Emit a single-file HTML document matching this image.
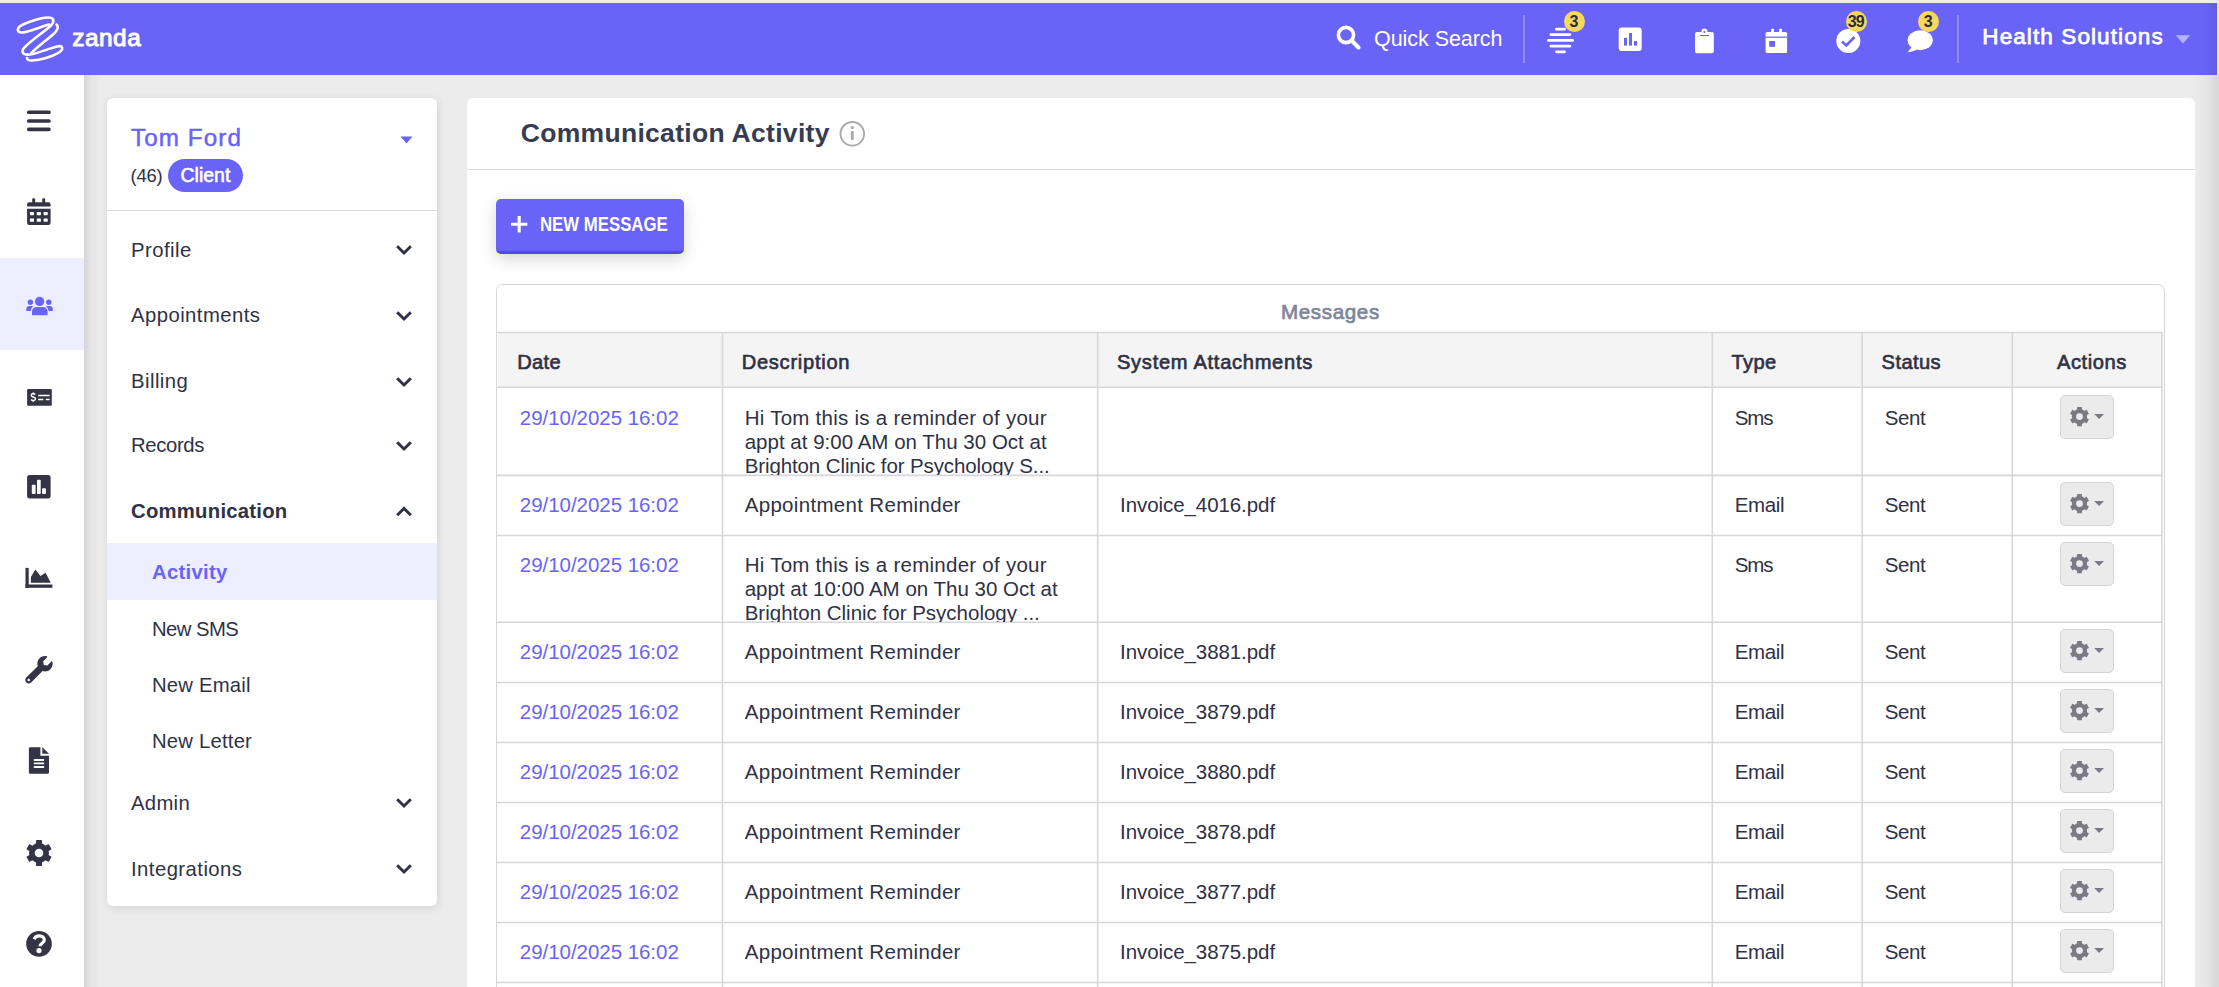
<!DOCTYPE html>
<html><head><meta charset="utf-8">
<style>
*{box-sizing:border-box;margin:0;padding:0}
html,body{width:2219px;height:987px;overflow:hidden;background:#ececec;font-family:"Liberation Sans",sans-serif;color:#2f3145}
.abs{position:absolute}
#topstrip{left:0;top:0;width:2219px;height:3px;background:#efeee9}
#rightstrip{left:2217px;top:0;width:2px;height:75px;background:#e6e6e4}
#hdrShade{left:2195px;top:3px;width:22px;height:72px;background:linear-gradient(to left,rgba(0,0,0,.07),rgba(0,0,0,.02) 45%,rgba(0,0,0,0))}
#rightstrip2{left:2217px;top:75px;width:2px;height:912px;background:#d9d9d9}
#hdr{left:0;top:3px;width:2217px;height:72px;background:#6964f7}
#side{left:0;top:75px;width:84px;height:912px;background:#fff}
#shadowL{left:84px;top:75px;width:17px;height:912px;background:linear-gradient(to right,rgba(0,0,0,.095),rgba(0,0,0,.03) 40%,rgba(0,0,0,0))}
#shadowR{left:2195px;top:75px;width:22px;height:912px;background:linear-gradient(to left,rgba(0,0,0,.09),rgba(0,0,0,.035) 40%,rgba(0,0,0,0))}
#activeNav{left:0;top:258px;width:84px;height:92px;background:#edeeff}
.card{background:#fff;border-radius:6px}
#leftcard{box-shadow:1px 2px 9px rgba(0,0,0,.11)}
#leftcard{left:107px;top:98px;width:330px;height:808px}
#maincard{left:467px;top:98px;width:1728px;height:920px}
.badge{width:21px;height:21px;border-radius:50%;background:#f7d95a;color:#2a2b3d;font-size:16px;font-weight:bold;text-align:center;line-height:22px}
.txt{position:absolute;white-space:nowrap;line-height:1}
</style></head><body>
<div class="abs" id="topstrip"></div>
<div class="abs" id="hdr"></div>
<div class="abs" id="rightstrip"></div><div class="abs" id="hdrShade"></div><div class="abs" id="rightstrip2"></div>
<!-- HEADER -->
<svg class="abs" style="left:0;top:0" width="160" height="75" viewBox="0 0 160 75">
  <g fill="none" stroke="#fff" stroke-width="2.6" stroke-linecap="round" stroke-linejoin="round">
    <path d="M49 24.5 C40 27 26 33 21 32.5 C16 32 17 27 23 24.5 C30 21 42 17.5 48 17.5 C54 17.5 55 21 51 25.5 C45 31 32 40 26 46 C20 51 22 55.5 30 54.5 C38 53.5 50 48 57 46.5 C63 45 64 49 59 52.5 C52 57 40 60 32 60.5 C28 60.7 27 59 27 58"/>
    <path d="M56.5 24.5 C59 26.5 58 30 53 34.5 C47 40 37 47 31.5 53"/>
  </g>
</svg>
<div class="txt" style="left:72.3px;top:25.6px;font-size:24.3px;font-weight:normal;color:#fff;letter-spacing:0.55px;-webkit-text-stroke:1px #fff">zanda</div>
<svg class="abs" style="left:1336px;top:25px" width="26" height="25" viewBox="0 0 26 25">
  <circle cx="10" cy="10" r="7.6" fill="none" stroke="#fff" stroke-width="3.6"/>
  <path d="M15.5 15.5 L22.5 22.5" stroke="#fff" stroke-width="4" stroke-linecap="round"/>
</svg>
<div class="txt" style="left:1374px;top:29px;font-size:21.5px;color:#fff;letter-spacing:-0.05px">Quick Search</div>
<div class="abs" style="left:1523px;top:15px;width:2px;height:48px;background:#8e8af9"></div>
<svg class="abs" style="left:1540px;top:22px" width="40" height="40" viewBox="1540 22 40 40">
  <g stroke="#fff" stroke-width="2.8" stroke-linecap="round">
    <path d="M1556.4 29.2 H1564.5"/><path d="M1551 34.6 H1569.8"/><path d="M1548.4 40.4 H1572.5"/><path d="M1551 46.2 H1569.8"/><path d="M1556.4 51.8 H1564.5"/>
  </g>
</svg>
<svg class="abs" style="left:1616px;top:25px" width="30" height="30" viewBox="1616 25 30 30">
  <rect x="1618.7" y="27.5" width="23" height="23.5" rx="3" fill="#fff"/>
  <rect x="1624" y="37.8" width="3" height="7.8" fill="#6964f7"/>
  <rect x="1629" y="33" width="3" height="12.6" fill="#6964f7"/>
  <rect x="1634" y="41" width="3" height="4.6" fill="#6964f7"/>
</svg>
<svg class="abs" style="left:1690px;top:25px" width="30" height="32" viewBox="1690 25 30 32">
  <rect x="1695" y="32" width="18.8" height="21.2" rx="2" fill="#fff"/>
  <circle cx="1704.4" cy="31.6" r="3" fill="#fff"/>
  <circle cx="1704.4" cy="31.9" r="1" fill="#6964f7"/>
  <rect x="1700" y="35" width="9" height="1.1" fill="#6964f7"/>
</svg>
<svg class="abs" style="left:1762px;top:25px" width="30" height="32" viewBox="1762 25 30 32">
  <rect x="1765.6" y="32" width="21.5" height="21" rx="1.5" fill="#fff"/>
  <rect x="1771" y="28.8" width="3" height="4" fill="#fff"/>
  <rect x="1779" y="28.8" width="3" height="4" fill="#fff"/>
  <rect x="1765.6" y="36.6" width="21.5" height="1.2" fill="#6964f7"/>
  <rect x="1769.2" y="41" width="5.8" height="5.8" fill="#6964f7"/>
</svg>
<svg class="abs" style="left:1832px;top:25px" width="34" height="32" viewBox="1832 25 34 32">
  <circle cx="1848.3" cy="41" r="12" fill="#fff"/>
  <path d="M1842 41.5 L1846.3 45.5 L1854.5 37" fill="none" stroke="#6964f7" stroke-width="2.6"/>
</svg>
<svg class="abs" style="left:1904px;top:27px" width="34" height="30" viewBox="1904 27 34 30">
  <ellipse cx="1920.2" cy="40.3" rx="12.6" ry="10" fill="#fff"/>
  <path d="M1912 46.5 L1907.8 52.2 C1912 51.8 1916 50.5 1918 49" fill="#fff"/>
</svg>
<!-- badges -->
<div class="abs badge" style="left:1563.5px;top:10.5px">3</div>
<div class="abs badge" style="left:1845.8px;top:10.5px;letter-spacing:-0.9px;text-indent:-0.9px">39</div>
<div class="abs badge" style="left:1917.8px;top:10.5px">3</div>
<div class="abs" style="left:1957px;top:15px;width:2px;height:48px;background:#8e8af9"></div>
<div class="txt" style="left:1982.3px;top:25.9px;font-size:22.5px;font-weight:normal;color:#fff;letter-spacing:1.1px;-webkit-text-stroke:0.75px #fff">Health Solutions</div>
<svg class="abs" style="left:2174px;top:34px" width="18" height="11" viewBox="0 0 18 11"><path d="M1.8 1.2 H16.2 L9 9.4 Z" fill="#b4b1fb"/></svg>

<div class="abs" id="side"></div>
<div class="abs" id="activeNav"></div>

<!-- SIDEBAR ICONS -->
<svg class="abs" style="left:0;top:75px" width="84" height="912" viewBox="0 75 84 912">
 <g fill="#343446">
  <rect x="27" y="110.5" width="23.7" height="3.6" rx="1.6"/>
  <rect x="27" y="119.2" width="23.7" height="3.6" rx="1.6"/>
  <rect x="27" y="127.6" width="23.7" height="3.6" rx="1.6"/>
 </g>
 <!-- calendar -->
 <g fill="#343446">
  <rect x="32.2" y="198.3" width="3" height="5" rx="1.2"/>
  <rect x="42.2" y="198.3" width="3" height="5" rx="1.2"/>
  <path d="M27.1 206.6 V204.4 A2.2 2.2 0 0 1 29.3 202.2 H48.4 A2.2 2.2 0 0 1 50.6 204.4 V206.6 Z"/>
  <path d="M27.1 208.8 H50.6 V222.7 A2.2 2.2 0 0 1 48.4 224.9 H29.3 A2.2 2.2 0 0 1 27.1 222.7 Z"/>
 </g>
 <g fill="#fff">
  <rect x="29.9" y="211.9" width="4.1" height="3.3" rx=".6"/><rect x="36.8" y="211.9" width="4.1" height="3.3" rx=".6"/><rect x="43.6" y="211.9" width="4.1" height="3.3" rx=".6"/>
  <rect x="29.9" y="218.4" width="4.1" height="3.4" rx=".6"/><rect x="36.8" y="218.4" width="4.1" height="3.4" rx=".6"/><rect x="43.6" y="218.4" width="4.1" height="3.4" rx=".6"/>
 </g>
 <!-- users -->
 <g fill="#6964f7">
  <circle cx="39.6" cy="301.4" r="4.6"/>
  <circle cx="30.4" cy="302.2" r="2.7"/>
  <circle cx="48.8" cy="302.2" r="2.7"/>
  <path d="M32 315.2 V311.5 C32 308.5 34 307 36.5 307 H42.8 C45.5 307 47.6 308.8 47.6 311.5 V315.2 Z"/>
  <path d="M26.3 311 V309 C26.3 307.3 27.6 306 29.3 306 H33.2 C31.8 307.5 31 309 30.7 311 Z"/>
  <path d="M52.8 311 V309 C52.8 307.3 51.5 306 49.8 306 H46 C47.4 307.5 48.2 309 48.5 311 Z"/>
 </g>
 <!-- invoice -->
 <rect x="27.1" y="389" width="24.7" height="16.8" rx="1" fill="#343446"/>
 <g fill="none" stroke="#fff" stroke-width="1.5">
  <path d="M35.3 394.6 C34.6 393.8 33.6 393.6 32.8 393.7 C31.3 393.9 30.9 395.4 31.8 396.3 C32.6 397 34.2 397.1 35 397.9 C35.9 398.8 35.4 400.4 33.6 400.5 C32.6 400.6 31.6 400.2 31 399.5"/>
  <path d="M33.3 392.4 V393.6 M33.3 400.5 V401.8"/>
  <path d="M38.2 395.4 H49.7 M38.2 399.5 H43.3 M45.8 399.5 H49.7"/>
 </g>
 <!-- bar chart -->
 <rect x="27.1" y="475.1" width="23.5" height="23.3" rx="2.6" fill="#343446"/>
 <g fill="#fff">
  <rect x="31.8" y="484.8" width="3.8" height="9.2" rx=".8"/>
  <rect x="37" y="479.8" width="3.7" height="14.2" rx=".8"/>
  <rect x="42.1" y="488.3" width="3.8" height="5.7" rx=".8"/>
 </g>
 <!-- area chart -->
 <g fill="#343446">
  <rect x="25.5" y="567.9" width="3.2" height="19.9"/>
  <rect x="25.5" y="584.5" width="26.9" height="3.3"/>
  <path d="M30.9 577 L35.4 569.6 L40.5 576 L45.5 572.8 L50.8 582.7 H30.9 Z"/>
 </g>
 <!-- wrench -->
 <g transform="translate(25.3 656) scale(0.0535)">
  <path fill="#343446" d="M507.73 109.1c-2.24-9.03-13.54-12.09-20.12-5.51l-74.36 74.36-67.88-11.31-11.31-67.880 74.36-74.36c6.62-6.62 3.430-17.9-5.66-20.16-47.380-11.74-99.550.91-136.58 37.93-39.640 39.640-50.550 97.1-34.050 147.2L18.740 402.76c-24.990 24.990-24.990 65.510 0 90.5 24.990 24.990 65.510 24.990 90.5 0l213.21-213.21c50.12 16.710 107.47 5.680 147.37-34.220 37.070-37.070 49.7-89.320 37.91-136.73zM64 472c-13.25 0-24-10.75-24-24 0-13.26 10.75-24 24-24s24 10.74 24 24c0 13.25-10.75 24-24 24z"/>
 </g>
 <!-- document -->
 <g fill="#343446">
  <path d="M28.9 748.5 A1.2 1.2 0 0 1 30.1 747.3 H40.4 V755.8 H49 V772.6 A1.2 1.2 0 0 1 47.8 773.8 H30.1 A1.2 1.2 0 0 1 28.9 772.6 Z"/>
  <path d="M42.3 747.3 L49 753.7 H42.3 Z"/>
 </g>
 <g fill="#fff">
  <rect x="33.8" y="758.9" width="10.3" height="2" rx=".5"/>
  <rect x="33.8" y="762.4" width="10.3" height="1.8" rx=".5"/>
  <rect x="33.8" y="765.9" width="10.3" height="2" rx=".5"/>
 </g>
 <!-- gear -->
 <g fill="#343446">
  <circle cx="39" cy="853" r="10"/>
  <rect x="36" y="840.1" width="6" height="25.8" rx=".6"/>
  <rect x="36" y="840.1" width="6" height="25.8" rx=".6" transform="rotate(60 39 853)"/>
  <rect x="36" y="840.1" width="6" height="25.8" rx=".6" transform="rotate(-60 39 853)"/>
 </g>
 <circle cx="39" cy="853" r="4.3" fill="#fff"/>
 <!-- help -->
 <circle cx="39" cy="943.8" r="12.85" fill="#343446"/>
 <path d="M34.2 939.2 C35 936.8 37 935.8 39.3 935.8 C42.3 935.8 44.3 937.7 44.3 940 C44.3 943.3 40 943.3 40 946.3" fill="none" stroke="#fff" stroke-width="3.2" stroke-linecap="butt"/>
 <circle cx="39" cy="950.6" r="2.6" fill="#fff"/>
</svg>
<div class="abs" id="shadowL"></div>
<div class="abs" id="shadowR"></div>
<div class="abs card" id="leftcard"></div>
<div class="abs card" id="maincard"></div>
<!-- MAIN START -->
<div class="abs" style="left:467px;top:168.5px;width:1728px;height:1.5px;background:#dedee2"></div>
<svg class="abs" style="left:838px;top:120px" width="28" height="28" viewBox="838 120 28 28"><circle cx="852.3" cy="133.8" r="11.8" fill="none" stroke="#a9a9b1" stroke-width="1.9"/><circle cx="852.3" cy="127.6" r="1.7" fill="#a9a9b1"/><rect x="850.8" y="131" width="3" height="9" rx="1" fill="#a9a9b1"/></svg>
<div class="abs" style="left:496.2px;top:199px;width:187.6px;height:54.9px;border-radius:5px;background:#6964f7;border-bottom:3.6px solid #4f49f5;box-shadow:0 5px 16px rgba(0,0,0,.16)"></div>
<svg class="abs" style="left:510px;top:215px" width="19" height="19" viewBox="510 215 19 19"><path d="M519.2 216 V232.6 M511 224.3 H527.4" stroke="#fff" stroke-width="3.1"/></svg>
<div class="txt" style="left:540.2px;top:214.79px;font-size:19.3px;font-weight:bold;color:#fff;transform:scaleX(0.87);transform-origin:0 0">NEW MESSAGE</div>
<div class="abs" style="left:495.6px;top:283.7px;width:1669.8px;height:760px;border:1.5px solid #d6d6da;border-radius:7px"></div>
<div class="abs" style="left:497.5px;top:332.5px;width:1665px;height:54.8px;background:#f4f4f5"></div>
<svg class="abs" style="left:0;top:0" width="2219" height="987" viewBox="0 0 2219 987"><g stroke="#d8d8dc" stroke-width="1.6"><path d="M496.3 332.5 H2162.5"/><path d="M496.3 387.3 H2162.5"/><path d="M496.3 475.4 H2162.5"/><path d="M496.3 535.5 H2162.5"/><path d="M496.3 622.3 H2162.5"/><path d="M496.3 682.5 H2162.5"/><path d="M496.3 742.5 H2162.5"/><path d="M496.3 802.5 H2162.5"/><path d="M496.3 862.5 H2162.5"/><path d="M496.3 922.5 H2162.5"/><path d="M496.3 982.5 H2162.5"/><path d="M722.5 332.5 V987"/><path d="M1097.7 332.5 V987"/><path d="M1712.3 332.5 V987"/><path d="M1862.2 332.5 V987"/><path d="M2012.3 332.5 V987"/><path d="M2162 332.5 V987"/></g></svg>
<div class="txt" style="left:520.8px;top:119.97px;font-size:26.5px;font-weight:bold;color:#363c52;letter-spacing:0.30px">Communication Activity</div>
<div class="txt" style="left:1281px;top:302.09px;font-size:20.6px;font-weight:normal;color:#7d8799;letter-spacing:0.62px;-webkit-text-stroke:0.7px #7d8799">Messages</div>
<div class="txt" style="left:517.2px;top:351.52px;font-size:20.1px;font-weight:normal;color:#2f3145;letter-spacing:0.31px;-webkit-text-stroke:0.65px #2f3145">Date</div>
<div class="txt" style="left:741.7px;top:351.52px;font-size:20.1px;font-weight:normal;color:#2f3145;letter-spacing:0.73px;-webkit-text-stroke:0.65px #2f3145">Description</div>
<div class="txt" style="left:1117px;top:351.52px;font-size:20.1px;font-weight:normal;color:#2f3145;letter-spacing:0.71px;-webkit-text-stroke:0.65px #2f3145">System Attachments</div>
<div class="txt" style="left:1731.5px;top:351.52px;font-size:20.1px;font-weight:normal;color:#2f3145;letter-spacing:0.41px;-webkit-text-stroke:0.65px #2f3145">Type</div>
<div class="txt" style="left:1881.6px;top:351.52px;font-size:20.1px;font-weight:normal;color:#2f3145;letter-spacing:0.42px;-webkit-text-stroke:0.65px #2f3145">Status</div>
<div class="txt" style="left:2057px;top:351.52px;font-size:20.1px;font-weight:normal;color:#2f3145;letter-spacing:0.58px;-webkit-text-stroke:0.65px #2f3145">Actions</div>
<div class="txt" style="left:519.8px;top:407.57px;font-size:20.5px;font-weight:normal;color:#6964f7;letter-spacing:-0.04px">29/10/2025 16:02</div>
<div class="txt" style="left:744.7px;top:407.57px;font-size:20.5px;font-weight:normal;color:#2f3145;letter-spacing:0.26px">Hi Tom this is a reminder of your</div>
<div class="txt" style="left:744.7px;top:431.57px;font-size:20.5px;font-weight:normal;color:#2f3145;letter-spacing:0.01px">appt at 9:00 AM on Thu 30 Oct at</div>
<div class="txt" style="left:744.7px;top:455.57px;font-size:20.5px;font-weight:normal;color:#2f3145;letter-spacing:-0.11px;height:19.32px;overflow:hidden;line-height:20.5px">Brighton Clinic for Psychology S...</div>
<div class="txt" style="left:1734.7px;top:407.57px;font-size:20.5px;font-weight:normal;color:#2f3145;letter-spacing:-1.13px">Sms</div>
<div class="txt" style="left:1884.8px;top:407.57px;font-size:20.5px;font-weight:normal;color:#2f3145;letter-spacing:-0.42px">Sent</div>
<div class="txt" style="left:519.8px;top:494.68px;font-size:20.5px;font-weight:normal;color:#6964f7;letter-spacing:-0.04px">29/10/2025 16:02</div>
<div class="txt" style="left:744.7px;top:494.68px;font-size:20.5px;font-weight:normal;color:#2f3145;letter-spacing:0.32px">Appointment Reminder</div>
<div class="txt" style="left:1120px;top:494.68px;font-size:20.5px;font-weight:normal;color:#2f3145;letter-spacing:-0.07px">Invoice_4016.pdf</div>
<div class="txt" style="left:1734.7px;top:494.68px;font-size:20.5px;font-weight:normal;color:#2f3145;letter-spacing:-0.35px">Email</div>
<div class="txt" style="left:1884.8px;top:494.68px;font-size:20.5px;font-weight:normal;color:#2f3145;letter-spacing:-0.42px">Sent</div>
<div class="txt" style="left:519.8px;top:554.78px;font-size:20.5px;font-weight:normal;color:#6964f7;letter-spacing:-0.04px">29/10/2025 16:02</div>
<div class="txt" style="left:744.7px;top:554.78px;font-size:20.5px;font-weight:normal;color:#2f3145;letter-spacing:0.26px">Hi Tom this is a reminder of your</div>
<div class="txt" style="left:744.7px;top:578.78px;font-size:20.5px;font-weight:normal;color:#2f3145;letter-spacing:0.00px">appt at 10:00 AM on Thu 30 Oct at</div>
<div class="txt" style="left:744.7px;top:602.78px;font-size:20.5px;font-weight:normal;color:#2f3145;letter-spacing:0.00px;height:19.02px;overflow:hidden;line-height:20.5px">Brighton Clinic for Psychology ...</div>
<div class="txt" style="left:1734.7px;top:554.78px;font-size:20.5px;font-weight:normal;color:#2f3145;letter-spacing:-1.13px">Sms</div>
<div class="txt" style="left:1884.8px;top:554.78px;font-size:20.5px;font-weight:normal;color:#2f3145;letter-spacing:-0.42px">Sent</div>
<div class="txt" style="left:519.8px;top:641.58px;font-size:20.5px;font-weight:normal;color:#6964f7;letter-spacing:-0.04px">29/10/2025 16:02</div>
<div class="txt" style="left:744.7px;top:641.58px;font-size:20.5px;font-weight:normal;color:#2f3145;letter-spacing:0.32px">Appointment Reminder</div>
<div class="txt" style="left:1120px;top:641.58px;font-size:20.5px;font-weight:normal;color:#2f3145;letter-spacing:-0.07px">Invoice_3881.pdf</div>
<div class="txt" style="left:1734.7px;top:641.58px;font-size:20.5px;font-weight:normal;color:#2f3145;letter-spacing:-0.35px">Email</div>
<div class="txt" style="left:1884.8px;top:641.58px;font-size:20.5px;font-weight:normal;color:#2f3145;letter-spacing:-0.42px">Sent</div>
<div class="txt" style="left:519.8px;top:701.78px;font-size:20.5px;font-weight:normal;color:#6964f7;letter-spacing:-0.04px">29/10/2025 16:02</div>
<div class="txt" style="left:744.7px;top:701.78px;font-size:20.5px;font-weight:normal;color:#2f3145;letter-spacing:0.32px">Appointment Reminder</div>
<div class="txt" style="left:1120px;top:701.78px;font-size:20.5px;font-weight:normal;color:#2f3145;letter-spacing:-0.07px">Invoice_3879.pdf</div>
<div class="txt" style="left:1734.7px;top:701.78px;font-size:20.5px;font-weight:normal;color:#2f3145;letter-spacing:-0.35px">Email</div>
<div class="txt" style="left:1884.8px;top:701.78px;font-size:20.5px;font-weight:normal;color:#2f3145;letter-spacing:-0.42px">Sent</div>
<div class="txt" style="left:519.8px;top:761.78px;font-size:20.5px;font-weight:normal;color:#6964f7;letter-spacing:-0.04px">29/10/2025 16:02</div>
<div class="txt" style="left:744.7px;top:761.78px;font-size:20.5px;font-weight:normal;color:#2f3145;letter-spacing:0.32px">Appointment Reminder</div>
<div class="txt" style="left:1120px;top:761.78px;font-size:20.5px;font-weight:normal;color:#2f3145;letter-spacing:-0.07px">Invoice_3880.pdf</div>
<div class="txt" style="left:1734.7px;top:761.78px;font-size:20.5px;font-weight:normal;color:#2f3145;letter-spacing:-0.35px">Email</div>
<div class="txt" style="left:1884.8px;top:761.78px;font-size:20.5px;font-weight:normal;color:#2f3145;letter-spacing:-0.42px">Sent</div>
<div class="txt" style="left:519.8px;top:821.78px;font-size:20.5px;font-weight:normal;color:#6964f7;letter-spacing:-0.04px">29/10/2025 16:02</div>
<div class="txt" style="left:744.7px;top:821.78px;font-size:20.5px;font-weight:normal;color:#2f3145;letter-spacing:0.32px">Appointment Reminder</div>
<div class="txt" style="left:1120px;top:821.78px;font-size:20.5px;font-weight:normal;color:#2f3145;letter-spacing:-0.07px">Invoice_3878.pdf</div>
<div class="txt" style="left:1734.7px;top:821.78px;font-size:20.5px;font-weight:normal;color:#2f3145;letter-spacing:-0.35px">Email</div>
<div class="txt" style="left:1884.8px;top:821.78px;font-size:20.5px;font-weight:normal;color:#2f3145;letter-spacing:-0.42px">Sent</div>
<div class="txt" style="left:519.8px;top:881.78px;font-size:20.5px;font-weight:normal;color:#6964f7;letter-spacing:-0.04px">29/10/2025 16:02</div>
<div class="txt" style="left:744.7px;top:881.78px;font-size:20.5px;font-weight:normal;color:#2f3145;letter-spacing:0.32px">Appointment Reminder</div>
<div class="txt" style="left:1120px;top:881.78px;font-size:20.5px;font-weight:normal;color:#2f3145;letter-spacing:-0.07px">Invoice_3877.pdf</div>
<div class="txt" style="left:1734.7px;top:881.78px;font-size:20.5px;font-weight:normal;color:#2f3145;letter-spacing:-0.35px">Email</div>
<div class="txt" style="left:1884.8px;top:881.78px;font-size:20.5px;font-weight:normal;color:#2f3145;letter-spacing:-0.42px">Sent</div>
<div class="txt" style="left:519.8px;top:941.78px;font-size:20.5px;font-weight:normal;color:#6964f7;letter-spacing:-0.04px">29/10/2025 16:02</div>
<div class="txt" style="left:744.7px;top:941.78px;font-size:20.5px;font-weight:normal;color:#2f3145;letter-spacing:0.32px">Appointment Reminder</div>
<div class="txt" style="left:1120px;top:941.78px;font-size:20.5px;font-weight:normal;color:#2f3145;letter-spacing:-0.07px">Invoice_3875.pdf</div>
<div class="txt" style="left:1734.7px;top:941.78px;font-size:20.5px;font-weight:normal;color:#2f3145;letter-spacing:-0.35px">Email</div>
<div class="txt" style="left:1884.8px;top:941.78px;font-size:20.5px;font-weight:normal;color:#2f3145;letter-spacing:-0.42px">Sent</div>
<div class="abs" style="left:2060.2px;top:395.1px;width:53.5px;height:43.6px;border:1.5px solid #d4d4d8;border-radius:5px;background:#ebebeb"></div>
<svg class="abs" style="left:2066px;top:403.1px" width="42" height="28" viewBox="2066 403.1 42 28"><g fill="#7b7a84"><circle cx="2079.5" cy="416.7" r="7.6"/><rect x="2077.1" y="407.1" width="4.8" height="19.2" rx=".3"/><rect x="2077.1" y="407.1" width="4.8" height="19.2" rx=".3" transform="rotate(60 2079.5 416.7)"/><rect x="2077.1" y="407.1" width="4.8" height="19.2" rx=".3" transform="rotate(-60 2079.5 416.7)"/><path d="M2094.2 414.1 H2104 L2099.1 419.1 Z"/></g><circle cx="2079.5" cy="416.7" r="3.4" fill="#ebebeb"/></svg>
<div class="abs" style="left:2060.2px;top:482.1px;width:53.5px;height:43.6px;border:1.5px solid #d4d4d8;border-radius:5px;background:#ebebeb"></div>
<svg class="abs" style="left:2066px;top:490.1px" width="42" height="28" viewBox="2066 490.1 42 28"><g fill="#7b7a84"><circle cx="2079.5" cy="503.7" r="7.6"/><rect x="2077.1" y="494.1" width="4.8" height="19.2" rx=".3"/><rect x="2077.1" y="494.1" width="4.8" height="19.2" rx=".3" transform="rotate(60 2079.5 503.7)"/><rect x="2077.1" y="494.1" width="4.8" height="19.2" rx=".3" transform="rotate(-60 2079.5 503.7)"/><path d="M2094.2 501.1 H2104 L2099.1 506.1 Z"/></g><circle cx="2079.5" cy="503.7" r="3.4" fill="#ebebeb"/></svg>
<div class="abs" style="left:2060.2px;top:542.2px;width:53.5px;height:43.6px;border:1.5px solid #d4d4d8;border-radius:5px;background:#ebebeb"></div>
<svg class="abs" style="left:2066px;top:550.2px" width="42" height="28" viewBox="2066 550.2 42 28"><g fill="#7b7a84"><circle cx="2079.5" cy="563.8" r="7.6"/><rect x="2077.1" y="554.2" width="4.8" height="19.2" rx=".3"/><rect x="2077.1" y="554.2" width="4.8" height="19.2" rx=".3" transform="rotate(60 2079.5 563.8)"/><rect x="2077.1" y="554.2" width="4.8" height="19.2" rx=".3" transform="rotate(-60 2079.5 563.8)"/><path d="M2094.2 561.2 H2104 L2099.1 566.2 Z"/></g><circle cx="2079.5" cy="563.8" r="3.4" fill="#ebebeb"/></svg>
<div class="abs" style="left:2060.2px;top:629.0px;width:53.5px;height:43.6px;border:1.5px solid #d4d4d8;border-radius:5px;background:#ebebeb"></div>
<svg class="abs" style="left:2066px;top:637.0px" width="42" height="28" viewBox="2066 637.0 42 28"><g fill="#7b7a84"><circle cx="2079.5" cy="650.6" r="7.6"/><rect x="2077.1" y="641.0" width="4.8" height="19.2" rx=".3"/><rect x="2077.1" y="641.0" width="4.8" height="19.2" rx=".3" transform="rotate(60 2079.5 650.6)"/><rect x="2077.1" y="641.0" width="4.8" height="19.2" rx=".3" transform="rotate(-60 2079.5 650.6)"/><path d="M2094.2 648.0 H2104 L2099.1 653.0 Z"/></g><circle cx="2079.5" cy="650.6" r="3.4" fill="#ebebeb"/></svg>
<div class="abs" style="left:2060.2px;top:689.2px;width:53.5px;height:43.6px;border:1.5px solid #d4d4d8;border-radius:5px;background:#ebebeb"></div>
<svg class="abs" style="left:2066px;top:697.2px" width="42" height="28" viewBox="2066 697.2 42 28"><g fill="#7b7a84"><circle cx="2079.5" cy="710.8" r="7.6"/><rect x="2077.1" y="701.2" width="4.8" height="19.2" rx=".3"/><rect x="2077.1" y="701.2" width="4.8" height="19.2" rx=".3" transform="rotate(60 2079.5 710.8)"/><rect x="2077.1" y="701.2" width="4.8" height="19.2" rx=".3" transform="rotate(-60 2079.5 710.8)"/><path d="M2094.2 708.2 H2104 L2099.1 713.2 Z"/></g><circle cx="2079.5" cy="710.8" r="3.4" fill="#ebebeb"/></svg>
<div class="abs" style="left:2060.2px;top:749.2px;width:53.5px;height:43.6px;border:1.5px solid #d4d4d8;border-radius:5px;background:#ebebeb"></div>
<svg class="abs" style="left:2066px;top:757.2px" width="42" height="28" viewBox="2066 757.2 42 28"><g fill="#7b7a84"><circle cx="2079.5" cy="770.8" r="7.6"/><rect x="2077.1" y="761.2" width="4.8" height="19.2" rx=".3"/><rect x="2077.1" y="761.2" width="4.8" height="19.2" rx=".3" transform="rotate(60 2079.5 770.8)"/><rect x="2077.1" y="761.2" width="4.8" height="19.2" rx=".3" transform="rotate(-60 2079.5 770.8)"/><path d="M2094.2 768.2 H2104 L2099.1 773.2 Z"/></g><circle cx="2079.5" cy="770.8" r="3.4" fill="#ebebeb"/></svg>
<div class="abs" style="left:2060.2px;top:809.2px;width:53.5px;height:43.6px;border:1.5px solid #d4d4d8;border-radius:5px;background:#ebebeb"></div>
<svg class="abs" style="left:2066px;top:817.2px" width="42" height="28" viewBox="2066 817.2 42 28"><g fill="#7b7a84"><circle cx="2079.5" cy="830.8" r="7.6"/><rect x="2077.1" y="821.2" width="4.8" height="19.2" rx=".3"/><rect x="2077.1" y="821.2" width="4.8" height="19.2" rx=".3" transform="rotate(60 2079.5 830.8)"/><rect x="2077.1" y="821.2" width="4.8" height="19.2" rx=".3" transform="rotate(-60 2079.5 830.8)"/><path d="M2094.2 828.2 H2104 L2099.1 833.2 Z"/></g><circle cx="2079.5" cy="830.8" r="3.4" fill="#ebebeb"/></svg>
<div class="abs" style="left:2060.2px;top:869.2px;width:53.5px;height:43.6px;border:1.5px solid #d4d4d8;border-radius:5px;background:#ebebeb"></div>
<svg class="abs" style="left:2066px;top:877.2px" width="42" height="28" viewBox="2066 877.2 42 28"><g fill="#7b7a84"><circle cx="2079.5" cy="890.8" r="7.6"/><rect x="2077.1" y="881.2" width="4.8" height="19.2" rx=".3"/><rect x="2077.1" y="881.2" width="4.8" height="19.2" rx=".3" transform="rotate(60 2079.5 890.8)"/><rect x="2077.1" y="881.2" width="4.8" height="19.2" rx=".3" transform="rotate(-60 2079.5 890.8)"/><path d="M2094.2 888.2 H2104 L2099.1 893.2 Z"/></g><circle cx="2079.5" cy="890.8" r="3.4" fill="#ebebeb"/></svg>
<div class="abs" style="left:2060.2px;top:929.2px;width:53.5px;height:43.6px;border:1.5px solid #d4d4d8;border-radius:5px;background:#ebebeb"></div>
<svg class="abs" style="left:2066px;top:937.2px" width="42" height="28" viewBox="2066 937.2 42 28"><g fill="#7b7a84"><circle cx="2079.5" cy="950.8" r="7.6"/><rect x="2077.1" y="941.2" width="4.8" height="19.2" rx=".3"/><rect x="2077.1" y="941.2" width="4.8" height="19.2" rx=".3" transform="rotate(60 2079.5 950.8)"/><rect x="2077.1" y="941.2" width="4.8" height="19.2" rx=".3" transform="rotate(-60 2079.5 950.8)"/><path d="M2094.2 948.2 H2104 L2099.1 953.2 Z"/></g><circle cx="2079.5" cy="950.8" r="3.4" fill="#ebebeb"/></svg>
<!-- MAIN END -->
<!-- LEFT CARD -->
<div class="txt" style="left:131px;top:126.3px;font-size:24.2px;font-weight:normal;color:#6964f7;letter-spacing:1.1px;-webkit-text-stroke:0.5px #6964f7">Tom Ford</div>
<svg class="abs" style="left:400px;top:135.5px" width="13" height="8" viewBox="0 0 13 8"><path d="M0.5 0.5 H12.5 L6.5 7.5 Z" fill="#6964f7"/></svg>
<div class="txt" style="left:130.5px;top:167px;font-size:18.4px;font-weight:normal;color:#2f3145;letter-spacing:-0.2px;">(46)</div>
<div class="abs" style="left:168px;top:159px;width:75px;height:33px;border-radius:16.5px;background:#6964f7"></div>
<div class="txt" style="left:180.5px;top:166px;font-size:19.4px;font-weight:normal;color:#fff;letter-spacing:0.05px;-webkit-text-stroke:0.6px #fff">Client</div>
<div class="abs" style="left:107px;top:209.5px;width:330px;height:1.5px;background:#dcdcdf"></div>
<div class="txt" style="left:131px;top:239.75px;font-size:20.3px;font-weight:normal;color:#2f3145;letter-spacing:0.45px;">Profile</div>
<svg class="abs" style="left:396.4px;top:245.4px" width="16" height="11" viewBox="0 0 16 11"><path d="M2.2 2.2 L8 8 L13.8 2.2" fill="none" stroke="#2f3145" stroke-width="2.9" stroke-linecap="square"/></svg>
<div class="txt" style="left:131px;top:304.94px;font-size:20.3px;font-weight:normal;color:#2f3145;letter-spacing:0.45px;">Appointments</div>
<svg class="abs" style="left:396.4px;top:310.6px" width="16" height="11" viewBox="0 0 16 11"><path d="M2.2 2.2 L8 8 L13.8 2.2" fill="none" stroke="#2f3145" stroke-width="2.9" stroke-linecap="square"/></svg>
<div class="txt" style="left:131px;top:371.05px;font-size:20.3px;font-weight:normal;color:#2f3145;letter-spacing:0.45px;">Billing</div>
<svg class="abs" style="left:396.4px;top:376.7px" width="16" height="11" viewBox="0 0 16 11"><path d="M2.2 2.2 L8 8 L13.8 2.2" fill="none" stroke="#2f3145" stroke-width="2.9" stroke-linecap="square"/></svg>
<div class="txt" style="left:131px;top:435.25px;font-size:20.3px;font-weight:normal;color:#2f3145;letter-spacing:-0.35px;">Records</div>
<svg class="abs" style="left:396.4px;top:440.9px" width="16" height="11" viewBox="0 0 16 11"><path d="M2.2 2.2 L8 8 L13.8 2.2" fill="none" stroke="#2f3145" stroke-width="2.9" stroke-linecap="square"/></svg>
<div class="txt" style="left:131px;top:500.75px;font-size:20.3px;font-weight:bold;color:#2f3145;letter-spacing:0.25px;">Communication</div>
<svg class="abs" style="left:396.4px;top:506.4px" width="16" height="11" viewBox="0 0 16 11"><path d="M2.2 8.2 L8 2.4 L13.8 8.2" fill="none" stroke="#2f3145" stroke-width="2.9" stroke-linecap="square"/></svg>
<div class="abs" style="left:107px;top:543px;width:330px;height:57px;background:#edeeff"></div>
<div class="txt" style="left:152px;top:562.14px;font-size:20.3px;font-weight:bold;color:#6964f7;letter-spacing:0.3px;">Activity</div>
<div class="txt" style="left:152px;top:618.75px;font-size:20.3px;font-weight:normal;color:#2f3145;letter-spacing:-0.55px;">New SMS</div>
<div class="txt" style="left:152px;top:675.25px;font-size:20.3px;font-weight:normal;color:#2f3145;letter-spacing:0.2px;">New Email</div>
<div class="txt" style="left:152px;top:731.35px;font-size:20.3px;font-weight:normal;color:#2f3145;letter-spacing:0.2px;">New Letter</div>
<div class="txt" style="left:131px;top:792.54px;font-size:20.3px;font-weight:normal;color:#2f3145;letter-spacing:0.3px;">Admin</div>
<svg class="abs" style="left:396.4px;top:798.2px" width="16" height="11" viewBox="0 0 16 11"><path d="M2.2 2.2 L8 8 L13.8 2.2" fill="none" stroke="#2f3145" stroke-width="2.9" stroke-linecap="square"/></svg>
<div class="txt" style="left:131px;top:858.54px;font-size:20.3px;font-weight:normal;color:#2f3145;letter-spacing:0.45px;">Integrations</div>
<svg class="abs" style="left:396.4px;top:864.2px" width="16" height="11" viewBox="0 0 16 11"><path d="M2.2 2.2 L8 8 L13.8 2.2" fill="none" stroke="#2f3145" stroke-width="2.9" stroke-linecap="square"/></svg>

</body></html>
